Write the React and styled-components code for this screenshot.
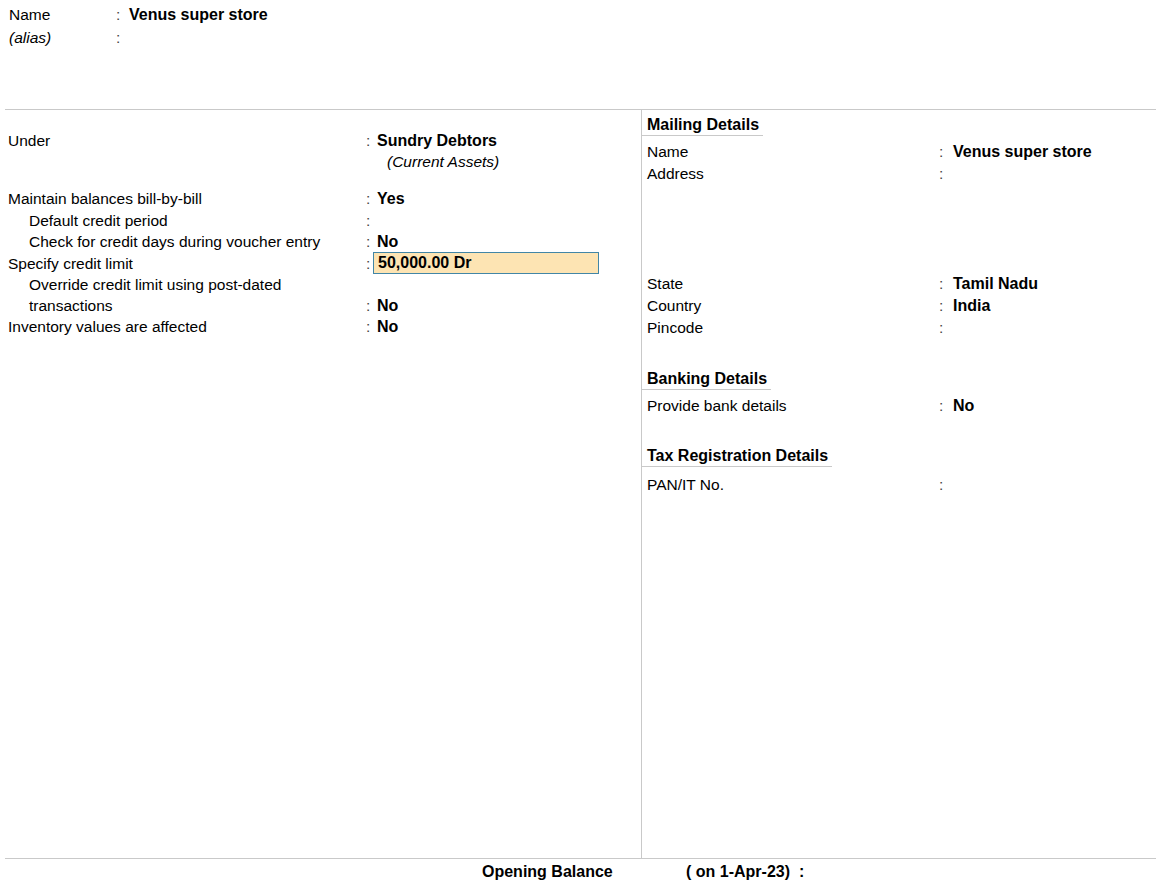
import React from "react";
import styled, { createGlobalStyle } from "styled-components";

const Global = createGlobalStyle`
  html, body { margin: 0; padding: 0; background: #ffffff; }
  body {
    font-family: "Liberation Sans", Arial, sans-serif;
    font-size: 15.5px;
    color: #000;
  }
  #root { width: 1156px; height: 890px; overflow: hidden; }
`;

const Page = styled.div`
  width: 1156px;
  height: 890px;
  display: flex;
  flex-direction: column;
`;

const Header = styled.div`
  height: 109px;
  box-sizing: border-box;
  padding: 3px 0 0 9px;
`;

const Row = styled.div`
  display: grid;
  grid-template-columns: ${(p) => p.$label}px ${(p) => p.$colon}px 1fr;
  align-items: end;
  line-height: ${(p) => p.$lh}px;
  min-height: ${(p) => p.$lh}px;
`;

const Label = styled.div`
  padding-left: ${(p) => (p.$indent ? 21 : 0)}px;
  font-style: ${(p) => (p.$italic ? "italic" : "normal")};
  white-space: nowrap;
`;

const Colon = styled.div`
  color: #444;
`;

const Value = styled.div`
  padding-left: ${(p) => p.$pad}px;
  font-weight: ${(p) => (p.$italic ? "normal" : "bold")};
  font-size: ${(p) => (p.$italic ? "15.5px" : "16px")};
  font-style: ${(p) => (p.$italic ? "italic" : "normal")};
  white-space: nowrap;
`;

const InputBox = styled.div`
  box-sizing: border-box;
  width: 226px;
  height: 22px;
  line-height: 20px;
  padding-left: 4px;
  background: #fde4b3;
  border: 1px solid #4286a6;
  font-weight: bold;
  font-size: 16px;
`;

const Main = styled.div`
  margin-left: 5px;
  height: 750px;
  box-sizing: border-box;
  border-top: 1px solid #c9c9c9;
  border-bottom: 1px solid #c9c9c9;
  display: grid;
  grid-template-columns: 637px 1fr;
`;

const LeftCol = styled.div`
  border-right: 1px solid #c9c9c9;
  padding: 20px 0 0 3px;
`;

const RightCol = styled.div`
  padding-top: 4px;
`;

const Spacer = styled.div`
  height: ${(p) => p.$h}px;
`;

const SectionTitle = styled.div`
  display: inline-block;
  font-weight: bold;
  font-size: 16px;
  line-height: 21px;
  padding: 0 4px 0 5px;
  border-bottom: 1px solid #c9c9c9;
  margin-top: ${(p) => p.$mt || 0}px;
  margin-bottom: ${(p) => p.$mb || 5}px;
`;

const Section = styled.div`
  display: flex;
  flex-direction: column;
  align-items: flex-start;
`;

const Rows = styled.div`
  align-self: stretch;
  padding-left: 5px;
`;

const Footer = styled.div`
  padding: 2px 0 0 482px;
  display: grid;
  grid-template-columns: 204px auto;
  line-height: 21px;
  font-weight: bold;
  font-size: 16px;
  white-space: pre;
`;

const L = { $label: 358, $colon: 7, $lh: 21.2 };
const R = { $label: 292, $colon: 7, $lh: 22 };

function LRow({ label, indent, colon = true, value, children }) {
  return (
    <Row {...L}>
      <Label $indent={indent}>{label}</Label>
      <Colon>{colon ? ":" : ""}</Colon>
      {children ? children : <Value $pad={4}>{value}</Value>}
    </Row>
  );
}

function RRow({ label, value }) {
  return (
    <Row {...R}>
      <Label>{label}</Label>
      <Colon>:</Colon>
      <Value $pad={7}>{value}</Value>
    </Row>
  );
}

export default function App() {
  return (
    <Page>
      <Global />
      <Header>
        <Row $label={107} $colon={7} $lh={23}>
          <Label>Name</Label>
          <Colon>:</Colon>
          <Value $pad={6}>Venus super store</Value>
        </Row>
        <Row $label={107} $colon={7} $lh={23}>
          <Label $italic>(alias)</Label>
          <Colon>:</Colon>
          <Value $pad={6}></Value>
        </Row>
      </Header>

      <Main>
        <LeftCol>
          <LRow label="Under" value="Sundry Debtors" />
          <Row {...L}>
            <Label />
            <Colon />
            <Value $pad={14} $italic>
              (Current Assets)
            </Value>
          </Row>
          <Spacer $h={16} />
          <LRow label="Maintain balances bill-by-bill" value="Yes" />
          <LRow label="Default credit period" indent value="" />
          <LRow label="Check for credit days during voucher entry" indent value="No" />
          <LRow label="Specify credit limit">
            <InputBox>50,000.00 Dr</InputBox>
          </LRow>
          <LRow
            label={
              <>
                Override credit limit using post-dated
                <br />
                transactions
              </>
            }
            indent
            value="No"
          />
          <LRow label="Inventory values are affected" value="No" />
        </LeftCol>

        <RightCol>
          <Section>
            <SectionTitle>Mailing Details</SectionTitle>
            <Rows>
              <RRow label="Name" value="Venus super store" />
              <RRow label="Address" value="" />
              <Spacer $h={88} />
              <RRow label="State" value="Tamil Nadu" />
              <RRow label="Country" value="India" />
              <RRow label="Pincode" value="" />
            </Rows>
          </Section>
          <Section>
            <SectionTitle $mt={29}>Banking Details</SectionTitle>
            <Rows>
              <RRow label="Provide bank details" value="No" />
            </Rows>
          </Section>
          <Section>
            <SectionTitle $mt={28} $mb={7}>Tax Registration Details</SectionTitle>
            <Rows>
              <RRow label="PAN/IT No." value="" />
            </Rows>
          </Section>
        </RightCol>
      </Main>

      <Footer>
        <span>Opening Balance</span>
        <span>( on 1-Apr-23)  :</span>
      </Footer>
    </Page>
  );
}
